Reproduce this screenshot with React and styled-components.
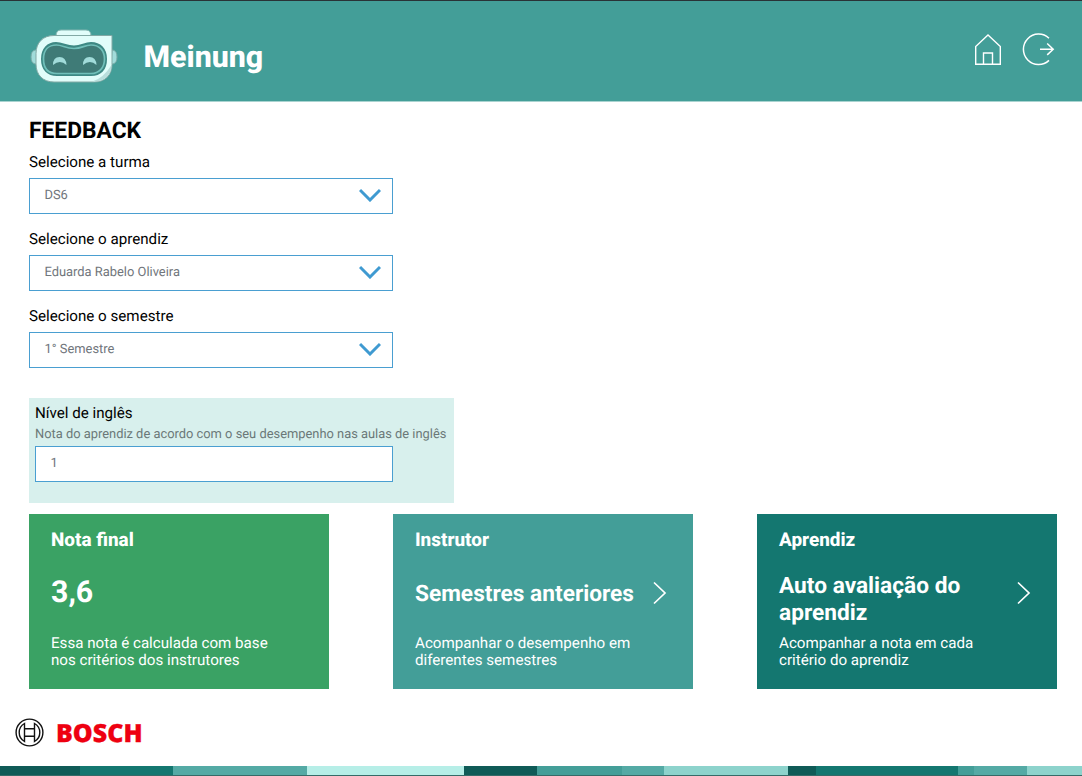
import React from "react";
import styled, { createGlobalStyle } from "styled-components";

const GlobalStyle = createGlobalStyle`
  * { box-sizing: border-box; }
  body { margin: 0; background: #fff; font-family: Roboto, "Liberation Sans", sans-serif; color: #000; text-rendering: geometricPrecision; }
  h1, h2, h3, p { margin: 0; }
  svg { display: block; flex: none; }
`;

const Page = styled.div`
  width: 1082px;
  height: 776px;
  display: flex;
  flex-direction: column;
  overflow: hidden;
`;

const Header = styled.header`
  height: 101px;
  flex: none;
  border-top: 1px solid #293236;
  background: #439e98;
  display: flex;
  align-items: flex-start;
  padding: 27px 26px 0 30px;
`;

const Brand = styled.h1`
  margin: 12px 0 0 25.5px;
  font-size: 30.3px;
  line-height: 36px;
  font-weight: 800;
  color: #fff;
`;

const HeaderActions = styled.nav`
  display: flex;
  gap: 20px;
  margin: 4px 0 0 auto;
`;

const IconButton = styled.button`
  padding: 0;
  border: 0;
  background: none;
`;

const Main = styled.main`
  flex: 1;
  padding: 16px 25px 0 29px;
  border-top: 1px solid #a9d3d0;
`;

const Title = styled.h2`
  font-size: 22.8px;
  line-height: 26px;
  height: 26px;
  font-weight: 700;
`;

const Field = styled.div`
  width: 364px;
  height: 77px;
  padding-top: 8px;
`;

const Label = styled.label`
  display: block;
  font-size: 15.15px;
  line-height: ${(p) => (p.$compact ? "19px" : "20px")};
  height: ${(p) => (p.$compact ? "18px" : "26px")};
`;

const Control = styled.div`
  width: ${(p) => p.$width || "364px"};
  height: 36px;
  border: 1px solid #4a9fd1;
  background: #fff;
  display: flex;
  align-items: center;
  justify-content: space-between;
  padding: 0 11px 1px 14.5px;
  font-size: 12.9px;
  line-height: 15px;
  color: #71767c;

  svg { margin-bottom: 1px; }
`;

const EnglishPanel = styled.section`
  width: 425px;
  height: 105px;
  margin-top: 23px;
  padding: 6px;
  background: #d8f0ed;
`;

const Hint = styled.p`
  font-size: 12.88px;
  line-height: 18px;
  height: 24px;
  padding-top: 4px;
  color: #6b7878;
  white-space: nowrap;
`;

const Cards = styled.div`
  display: flex;
  justify-content: space-between;
  margin-top: 11px;
`;

const Card = styled.article`
  width: 300px;
  height: 175px;
  padding: 15px 22px 0;
  background: ${(p) => p.$color};
  color: #fff;
`;

const CardTitle = styled.h3`
  font-size: 18.9px;
  line-height: 22px;
  font-weight: 800;
`;

const CardBody = styled.div`
  height: 84px;
  display: flex;
  align-items: center;
  justify-content: space-between;
  padding: ${(p) => (p.$large ? "0 4px 0 0" : "3px 4px 0 0")};

  svg { margin-bottom: 3px; }
`;

const CardHeading = styled.p`
  font-size: ${(p) => (p.$large ? "30.3px" : "22.7px")};
  line-height: 26.5px;
  font-weight: 700;
  white-space: pre-line;
  margin-top: ${(p) => (p.$twoLines ? "10px" : "0")};
`;

const CardText = styled.p`
  font-size: 15.15px;
  line-height: 17.4px;
  white-space: pre-line;
`;

const Footer = styled.footer`
  flex: none;
  height: 61px;
  display: flex;
  align-items: center;
  gap: 12px;
  padding: 0 0 6px 15px;
`;

const Wordmark = styled.span`
  font-family: "Open Sans", sans-serif;
  font-size: 25px;
  line-height: 30px;
  font-weight: 800;
  color: #ee0010;
  -webkit-text-stroke: 0.3px #ee0010;
`;

const Strip = styled.div`
  flex: none;
  display: flex;
  height: 10px;
  border-bottom: 1px solid #356b68;
`;

const Band = styled.span`
  width: ${(p) => p.$width}px;
  background: ${(p) => p.$color};
`;

const bands = [
  [80, "#0f5b57"], [93, "#147770"], [134, "#54aaa5"], [157, "#b6eee7"],
  [73, "#0f5b57"], [85, "#439e98"], [42, "#54aaa5"], [124, "#8dd3cc"],
  [28, "#0f5b57"], [142, "#147770"], [16, "#439e98"], [53, "#54aaa5"], [55, "#8dd3cc"],
];

const fields = [
  ["Selecione a turma", "DS6"],
  ["Selecione o aprendiz", "Eduarda Rabelo Oliveira"],
  ["Selecione o semestre", "1° Semestre"],
];

const cards = [
  { color: "#3aa264", title: "Nota final", heading: "3,6", large: true, text: "Essa nota é calculada com base\nnos critérios dos instrutores" },
  { color: "#439e98", title: "Instrutor", heading: "Semestres anteriores", text: "Acompanhar o desempenho em\ndiferentes semestres" },
  { color: "#147770", title: "Aprendiz", heading: "Auto avaliação do\naprendiz", twoLines: true, text: "Acompanhar a nota em cada\ncritério do aprendiz" },
];

const Robot = () => (
  <svg width="88" height="56" viewBox="30 28 88 56" fill="none">
    <path d="M37 50h-2q-4 1-4 7t4 7h2zM112 50h1q4 1 4 7t-4 7h-2z" fill="#a1dcda" stroke="#75aaa6" />
    <path d="M56 36q0-6 5-6h25q5 0 5 6z" fill="#e1fdfa" stroke="#82b5b0" />
    <path d="M54 35.500h58v29C112 75 105 82 94.500 82H54c-11 0-18-7-18-18V53.500c0-11 7-18 18-18z" fill="#e1fdfa" stroke="#82a9a5" />
    <path d="M111.500 65c0 10-7 16.500-17 16.500h-2q11-3.500 19-16.500z" fill="#b9dedc" />
    <path d="M42 59c0-10 6-16 14-16 7 0 10 3.500 18 3.500S84 43 91 43c9 0 15 6 15 16 0 11-6 16-15 16H57c-9 0-15-5-15-16z" fill="#3f7f7b" stroke="#3d8984" strokeWidth="2" />
    <path d="M43.500 59c0-9 5-14 13-14 6 0 9 3.500 17.500 3.500S84 45 91 45c8 0 13.500 5 13.500 14S99 73.500 91 73.500H57C48 73.500 43.500 69 43.500 59z" fill="#3f7b77" stroke="#70c0ba" strokeWidth="1.7" />
    <path d="M53 65q0-8 6.500-8t7 8q-6.500-6-13.500 0zM83 65q0-8 6.500-8t7 8q-6.500-6-13.500 0z" fill="#a1dcda" />
  </svg>
);

const Home = () => (
  <svg width="28" height="34" viewBox="974 32 28 34" fill="none" stroke="#fff" strokeWidth="1.4">
    <path d="M975.700 64.300V46.500L988 35l12.300 11.500v17.800zM983.500 64V53h9v11" />
  </svg>
);

const Exit = () => (
  <svg width="34" height="34" viewBox="1022 32 34 34" fill="none" stroke="#fff" strokeWidth="1.5">
    <path d="M1049 38.200a15.200 15.200 0 1 0 0 22.200M1040 49.200h13.200M1047.200 43.500l6 5.700-6 5.700" />
  </svg>
);

const ChevronDown = () => (
  <svg width="22" height="14" fill="none" stroke="#3f9ad1" strokeWidth="3">
    <path d="M1 2l10 10 10-10" />
  </svg>
);

const ChevronRight = () => (
  <svg width="14" height="24" fill="none" stroke="#fff" strokeWidth="1.7">
    <path d="M1 1.500l11 10.500L1 22.500" />
  </svg>
);

const BoschMark = () => (
  <svg width="29" height="29" viewBox="0 0 29 29" fill="none" stroke="#111" strokeWidth="1.4">
    <circle cx="14.500" cy="14.500" r="13.400" />
    <path d="M9.500 5.500a10.300 10.300 0 0 0 0 18zM19.500 5.500a10.300 10.300 0 0 1 0 18zM9.500 10.700h10M9.500 18.300h10" />
  </svg>
);

export default function App() {
  return (
    <Page>
      <GlobalStyle />
      <Header>
        <Robot />
        <Brand>Meinung</Brand>
        <HeaderActions>
          <IconButton aria-label="Início"><Home /></IconButton>
          <IconButton aria-label="Sair"><Exit /></IconButton>
        </HeaderActions>
      </Header>
      <Main>
        <Title>FEEDBACK</Title>
        {fields.map(([label, value]) => (
          <Field key={label}>
            <Label>{label}</Label>
            <Control>{value}<ChevronDown /></Control>
          </Field>
        ))}
        <EnglishPanel>
          <Label $compact>Nível de inglês</Label>
          <Hint>Nota do aprendiz de acordo com o seu desempenho nas aulas de inglês</Hint>
          <Control $width="358px">1</Control>
        </EnglishPanel>
        <Cards>
          {cards.map((c) => (
            <Card key={c.title} $color={c.color}>
              <CardTitle>{c.title}</CardTitle>
              <CardBody $large={c.large}>
                <CardHeading $large={c.large} $twoLines={c.twoLines}>{c.heading}</CardHeading>
                {!c.large && <ChevronRight />}
              </CardBody>
              <CardText>{c.text}</CardText>
            </Card>
          ))}
        </Cards>
      </Main>
      <Footer>
        <BoschMark />
        <Wordmark>BOSCH</Wordmark>
      </Footer>
      <Strip>
        {bands.map(([width, color], i) => <Band key={i} $width={width} $color={color} />)}
      </Strip>
    </Page>
  );
}
